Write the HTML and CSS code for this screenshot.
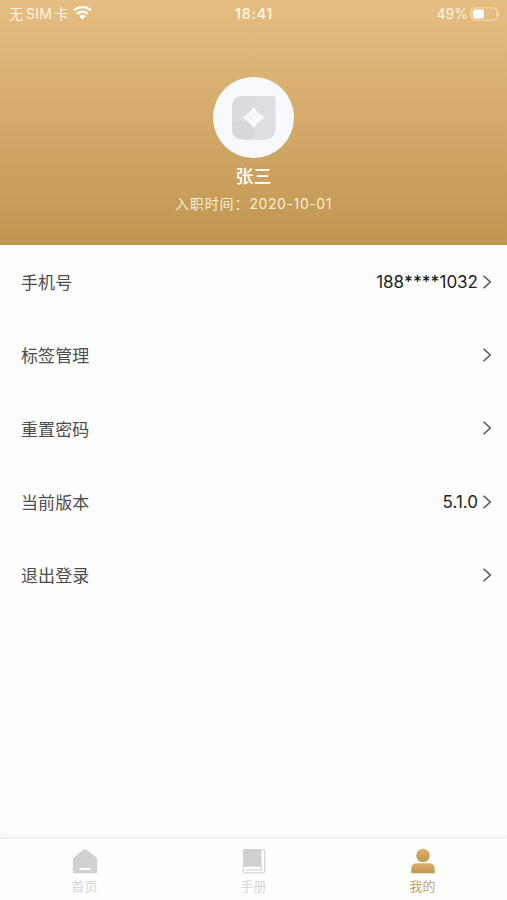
FILE: index.html
```html
<!DOCTYPE html>
<html lang="zh-CN">
<head>
  <meta charset="UTF-8">
  <meta name="viewport" content="width=device-width, initial-scale=1">
  <title>我的</title>
  <link rel="stylesheet" href="styles.css">
</head>
<body>

  <header class="profile">
    <div class="status-bar">
      <div class="carrier">
        <span>无<span class="sim">SIM</span>卡</span>
        <svg class="wifi" viewBox="0 0 18 14" width="19" height="15">
          <path d="M1 5.1a11.6 11.6 0 0 1 16 0" />
          <path d="M3.900 8.300a7.400 7.400 0 0 1 10.200 0" />
          <path class="dot" d="M9 13.700 5.900 10.600a4.600 4.600 0 0 1 6.200 0z" />
        </svg>
      </div>
      <div class="clock">18:41</div>
      <div class="power">
        <span>49%</span>
        <svg viewBox="0 0 30 14" width="30" height="14">
          <rect x="1" y=".8" width="25.6" height="12.4" rx="3.4" fill="none" stroke="#f6dfbb" stroke-width="1" />
          <rect x="2.9" y="2.6" width="10.8" height="8.8" rx="1.6" fill="#fff" />
          <path d="M27.800 4.600c2 1 2 3.800 0 4.800z" fill="#f6dfbb" />
        </svg>
      </div>
    </div>

    <div class="avatar">
      <svg viewBox="0 0 44 44" width="44" height="44">
        <defs>
          <linearGradient id="petal" x1="0" y1="0" x2="1" y2="1">
            <stop offset="0" stop-color="#d9dae0" />
            <stop offset="1" stop-color="#e0e1e6" />
          </linearGradient>
        </defs>
        <path d="M11 0H40Q43.500 0 43.500 4V32Q43.500 43.500 32 43.500H12Q0 43.500 0 32V11Q0 0 11 0z" fill="url(#petal)" />
        <path d="M0 26Q13 22 21.500 31V43.500H12Q0 43.500 0 32z" fill="#d7d8de" />
        <path d="M21.500 31 31 22 43.500 32Q43.500 43.500 32 43.500H25z" fill="#dddee4" />
        <path d="M21.500 11.500Q25.500 18 32 21.500Q25.500 25 21.500 31.500Q17.500 25 11 21.500Q17.500 18 21.500 11.500z" fill="#f8f8ff" stroke="#f8f8ff" stroke-width="1" stroke-linejoin="round" />
      </svg>
    </div>
    <h1>张三</h1>
    <p class="joined">入职时间：<span>2020-10-01</span></p>
  </header>

  <main class="menu">
    <a class="row">
      <span class="label">手机号</span>
      <span class="value phone">188<span class="mask">****</span>1032</span>
      <svg class="arrow" viewBox="0 0 10 16"><path d="M1.500 1.700 8.300 8 1.500 14.300" /></svg>
    </a>
    <a class="row">
      <span class="label">标签管理</span>
      <svg class="arrow" viewBox="0 0 10 16"><path d="M1.500 1.700 8.300 8 1.500 14.300" /></svg>
    </a>
    <a class="row">
      <span class="label">重置密码</span>
      <svg class="arrow" viewBox="0 0 10 16"><path d="M1.500 1.700 8.300 8 1.500 14.300" /></svg>
    </a>
    <a class="row">
      <span class="label">当前版本</span>
      <span class="value">5.1.0</span>
      <svg class="arrow" viewBox="0 0 10 16"><path d="M1.500 1.700 8.300 8 1.500 14.300" /></svg>
    </a>
    <a class="row">
      <span class="label">退出登录</span>
      <svg class="arrow" viewBox="0 0 10 16"><path d="M1.500 1.700 8.300 8 1.500 14.300" /></svg>
    </a>
  </main>

  <nav class="tabbar">
    <a class="tab">
      <svg viewBox="0 0 26 26" width="26" height="26">
        <path d="M12 1.300Q13 .5 14 1.300L24.600 9.800Q25.200 10.300 25.200 11V24.500Q25.200 25.200 24.500 25.200H1.500Q.8 25.200 .8 24.500V11Q.8 10.300 1.400 9.800z" fill="#cfd0d4" />
        <rect x="7" y="20" width="12" height="2" rx="1" fill="#fff" />
      </svg>
      <span>首页</span>
    </a>
    <a class="tab">
      <svg viewBox="0 0 26 26" width="26" height="26">
        <path d="M3.500 1H20.500V18.800H2V2.500Q2 1 3.500 1z" fill="#cfd0d4" />
        <path d="M20.500 1.800H22.500Q23.700 1.800 23.700 3V23.500Q23.700 24.800 22.500 24.800H4Q2.300 24.800 2.300 23V18" fill="none" stroke="#d5d6d9" stroke-width="1.300" />
        <path d="M4.500 21.800H20.300V18" fill="none" stroke="#d5d6d9" stroke-width="1.200" />
      </svg>
      <span>手册</span>
    </a>
    <a class="tab active">
      <svg viewBox="0 0 26 26" width="26" height="26">
        <defs>
          <linearGradient id="gold" x1="0" y1="0" x2="0" y2="1">
            <stop offset="0" stop-color="#d8b072" />
            <stop offset="1" stop-color="#c19850" />
          </linearGradient>
        </defs>
        <circle cx="13" cy="7.500" r="6.800" fill="url(#gold)" />
        <path d="M1.200 25.200V21Q1.200 15.200 7 15.200H19Q24.800 15.200 24.800 21V24.400Q24.800 25.200 24 25.200z" fill="url(#gold)" />
      </svg>
      <span>我的</span>
    </a>
  </nav>

</body>
</html>
```
FILE: styles.css
```css
:root {
  --gold-light: #e6be83;
  --gold-dark: #bf9650;
  --text: #4d4d4d;
}

* {
  box-sizing: border-box;
}

body {
  margin: 0;
  height: 900px;
  display: flex;
  flex-direction: column;
  background: #fdfdfd;
  color: var(--text);
  font-family: Inter, "Noto Sans CJK SC", sans-serif;
}

svg {
  display: block;
}

/* 头部 */
.profile {
  height: 245px;
  display: flex;
  flex-direction: column;
  align-items: center;
  flex-shrink: 0;
  background: linear-gradient(to bottom, var(--gold-light), var(--gold-dark));
  color: #fff;
}

.status-bar {
  width: 100%;
  height: 27px;
  padding: 0 7px 0 9px;
  display: grid;
  grid-template-columns: 1fr auto 1fr;
  align-items: center;
  font-size: 14px;
  line-height: 20px;
  color: #fff3df;
}

.carrier,
.power {
  display: flex;
  align-items: center;
}

.carrier {
  gap: 5px;
}

.sim {
  margin: 0 2px 0 3px;
  letter-spacing: 0.3px;
}

.wifi {
  margin-top: -3px;
}

.wifi path {
  fill: none;
  stroke: #fff;
  stroke-width: 2.3;
}

.wifi .dot {
  fill: #fff;
  stroke: none;
}

.clock {
  margin-right: 1px;
  font-weight: 600;
  letter-spacing: 0.8px;
}

.power {
  justify-content: flex-end;
  gap: 2px;
}

.avatar {
  width: 81px;
  height: 81px;
  margin-top: 50px;
  display: flex;
  align-items: center;
  justify-content: center;
  border-radius: 50%;
  background: #f8f8ff;
}

h1 {
  margin: 6px 0 0;
  font-size: 18px;
  font-weight: 500;
  line-height: 26px;
}

.joined {
  margin: 4px 0 0;
  font-size: 14px;
  line-height: 20px;
  letter-spacing: 0.9px;
  color: #fbecd4;
}

.joined span {
  letter-spacing: 0.6px;
}

/* 列表 */
.menu {
  flex: 1;
}

.row {
  height: 73.3px;
  padding: 0 15px 0 21px;
  display: flex;
  align-items: center;
}

.label {
  flex: 1;
  font-size: 17px;
  letter-spacing: 0.1px;
}

.value {
  margin-right: 4px;
  font-size: 17px;
  color: #222;
}

.mask {
  font-weight: 500;
}

.arrow {
  width: 10px;
  height: 16px;
  fill: none;
  stroke: #555;
  stroke-width: 1.5;
}

/* 底部导航 */
.tabbar {
  height: 61px;
  display: grid;
  grid-template-columns: repeat(3, 1fr);
  background: #fefefe;
  box-shadow: 0 -2px 3px 1px #f0f0f0;
}

.tab {
  padding-top: 9px;
  display: flex;
  flex-direction: column;
  align-items: center;
  font-size: 13px;
  line-height: 20px;
  color: #d4d5d8;
}

.tab span {
  margin-top: 2px;
}

.tab.active {
  color: #c8a164;
}
```
